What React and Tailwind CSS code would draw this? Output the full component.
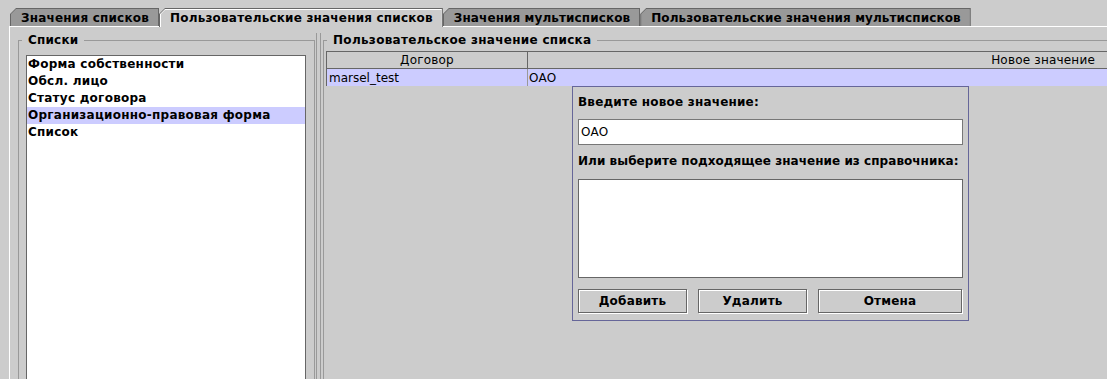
import React from "react";

const tabs = [
  { label: "Значения списков", selected: false, track: "tracking-[0.2px]" },
  { label: "Пользовательские значения списков", selected: true, track: "tracking-[0.2px]" },
  { label: "Значения мультисписков", selected: false, track: "tracking-[0.1px]" },
  { label: "Пользовательские значения мультисписков", selected: false, track: "tracking-[0.1px]" },
];

const lists = [
  "Форма собственности",
  "Обсл. лицо",
  "Статус договора",
  "Организационно-правовая форма",
  "Список",
];

const Tab = ({ label, selected, track }) => (
  <div className={selected ? "h-[19px] -mb-px z-10" : "h-[18px]"}>
    <div className="h-full bg-[#666666] pt-px px-px [clip-path:polygon(6px_0,100%_0,100%_100%,0_100%,0_6px)]">
      <div
        className={
          "h-full pt-px pl-px [clip-path:polygon(5px_0,100%_0,100%_100%,0_100%,0_5px)] " +
          (selected ? "bg-white" : "bg-[#999999]")
        }
      >
        <div
          className={
            "h-full flex items-center px-[9px] pb-[1px] font-bold whitespace-nowrap [clip-path:polygon(4px_0,100%_0,100%_100%,0_100%,0_4px)] " +
            track +
            " " +
            (selected ? "bg-[#cccccc]" : "bg-[#999999]")
          }
        >
          {label}
        </div>
      </div>
    </div>
  </div>
);

const Button = ({ children, className }) => (
  <div
    className={
      "h-[24px] flex items-center justify-center border border-[#666666] font-bold tracking-[0.2px] shadow-[inset_1px_1px_0_#ffffff,1px_1px_0_#ffffff] " +
      className
    }
  >
    {children}
  </div>
);

export default function App() {
  return (
    <div className="relative w-[1107px] h-[379px] overflow-hidden bg-[#cccccc] text-black text-[12px] leading-[14px] font-['DejaVu_Sans','Liberation_Sans',sans-serif]">
      {/* Tabs */}
      <div className="flex items-end h-[26px] pl-[10px]">
        {tabs.map((t) => (
          <Tab key={t.label} {...t} />
        ))}
      </div>

      {/* Tab content */}
      <div className="ml-[9px] h-[400px] flex border-l border-t border-white pl-[8px] pt-[6px]">
        {/* Списки */}
        <fieldset className="min-w-0 w-[297px] shrink-0 h-[400px] border border-[#999999] pl-[7px] pr-[8px]">
          <legend className="-ml-[4px] px-[6px] font-bold tracking-[0.2px] leading-[14px]">Списки</legend>
          <div className="mt-[8px] h-[340px] bg-white border border-[#666666]">
            {lists.map((item) => (
              <div
                key={item}
                className={
                  "h-[17px] leading-[17px] pl-[1px] font-bold tracking-[0.25px] whitespace-nowrap " +
                  (item === "Организационно-правовая форма" ? "bg-[#ccccff]" : "")
                }
              >
                {item}
              </div>
            ))}
          </div>
        </fieldset>

        {/* Divider */}
        <div className="w-px shrink-0" />
        <div className="w-px shrink-0 bg-[#999999]" />
        <div className="w-[3px] shrink-0" />
        <div className="w-px shrink-0 bg-[#999999]" />
        <div className="w-[2px] shrink-0" />

        {/* Пользовательское значение списка */}
        <fieldset className="min-w-0 w-[800px] shrink-0 h-[400px] border border-[#999999] pl-[2px]">
          <legend className="ml-[1px] px-[6px] font-bold tracking-[0.3px] leading-[14px]">
            Пользовательское значение списка
          </legend>
          <div className="mt-[4px] w-[781px] border-l border-[#666666]">
            <div className="flex h-[18px] border-y border-[#666666]">
              <div className="w-[201px] border-r border-[#666666] flex items-center justify-center tracking-[0.2px]">
                Договор
              </div>
              <div className="flex-1 flex items-center justify-end pr-[12px] tracking-[0.2px]">
                Новое значение
              </div>
            </div>
            <div className="flex h-[17px] bg-[#ccccff]">
              <div className="w-[201px] border-r border-[#999999] pl-[2px] flex items-center">
                marsel_test
              </div>
              <div className="flex-1 pl-[1px] flex items-center">ОАО</div>
            </div>
          </div>
        </fieldset>
      </div>

      {/* Editor popup */}
      <div className="absolute left-[572px] top-[86px] w-[397px] h-[235px] border border-[#666699] bg-[#cccccc] px-[5px] pt-[8px]">
        <div className="h-[14px] font-bold tracking-[0.2px]">Введите новое значение:</div>
        <div className="mt-[10px] h-[26px] flex items-center bg-white border border-[#777777] pl-[2px]">
          ОАО
        </div>
        <div className="mt-[9px] h-[14px] font-bold tracking-[0.05px] whitespace-nowrap">
          Или выберите подходящее значение из справочника:
        </div>
        <div className="mt-[11px] h-[99px] bg-white border border-[#666666]" />
        <div className="mt-[11px] flex gap-[11px]">
          <Button className="w-[109px]">Добавить</Button>
          <Button className="w-[109px]">Удалить</Button>
          <Button className="w-[144px]">Отмена</Button>
        </div>
      </div>
    </div>
  );
}
